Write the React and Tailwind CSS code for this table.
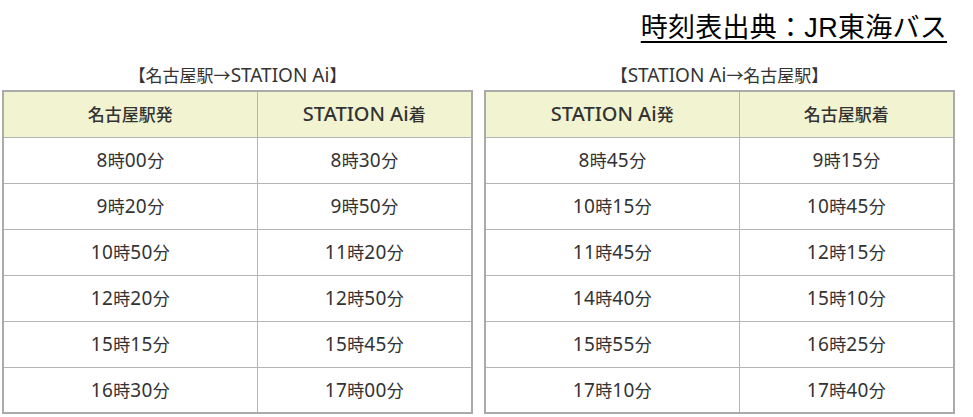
const outbound = {
  title: '【名古屋駅→STATION Ai】',
  head: ['名古屋駅発', 'STATION Ai着'],
  rows: [
    ['8時00分', '8時30分'],
    ['9時20分', '9時50分'],
    ['10時50分', '11時20分'],
    ['12時20分', '12時50分'],
    ['15時15分', '15時45分'],
    ['16時30分', '17時00分'],
  ],
};

const inbound = {
  title: '【STATION Ai→名古屋駅】',
  head: ['STATION Ai発', '名古屋駅着'],
  rows: [
    ['8時45分', '9時15分'],
    ['10時15分', '10時45分'],
    ['11時45分', '12時15分'],
    ['14時40分', '15時10分'],
    ['15時55分', '16時25分'],
    ['17時10分', '17時40分'],
  ],
};

// latin runs are set a bit larger than the kana/kanji, like the source font does
const Mixed = ({ text, latin }) =>
  text.split(/([A-Za-z0-9 ]+)/).map((part, i) =>
    /^[A-Za-z0-9 ]+$/.test(part) ? (
      <span key={i} className={latin}>{part}</span>
    ) : (
      <span key={i}>{part}</span>
    )
  );

const Timetable = ({ data }) => (
  <div className="w-[471px] flex flex-col">
    <div className="h-[30px] flex items-start justify-center pt-[4px] text-[17px] leading-[22px] text-[#333]">
      <span><Mixed text={data.title} latin="text-[19px]" /></span>
    </div>
    <table className="w-full border-collapse border-2 border-[#aaa] text-[#333]">
      <thead>
        <tr className="bg-[#f2f3d0] h-[46px]">
          <th className="w-[254px] border border-[#b5b5b5] text-[17px] font-medium">
            <Mixed text={data.head[0]} latin="text-[20px]" />
          </th>
          <th className="border border-[#b5b5b5] text-[17px] font-medium">
            <Mixed text={data.head[1]} latin="text-[20px]" />
          </th>
        </tr>
      </thead>
      <tbody>
        {data.rows.map((r, i) => (
          <tr key={i} className="h-[46px]">
            {r.map((c, j) => (
              <td key={j} className="border border-[#b5b5b5] text-center text-[17px]">
                <Mixed text={c} latin="text-[19px] tracking-[0.02em]" />
              </td>
            ))}
          </tr>
        ))}
      </tbody>
    </table>
  </div>
);

export default function App() {
  return (
    <div className="w-[973px] h-[417px] bg-white overflow-hidden" style={{ fontFamily: '"Noto Sans", "Noto Sans CJK JP", sans-serif' }}>
      <div className="flex justify-end pr-[26px] pt-[10px] h-[60px]">
        <span className="text-[27px] leading-[36px] text-black underline underline-offset-[4px] decoration-[2px] tracking-[0.01em]" style={{ fontFamily: '"Liberation Sans", "Noto Sans CJK JP", sans-serif' }}>
          時刻表出典：JR東海バス
        </span>
      </div>
      <div className="flex gap-[11px] pl-[2px]">
        <Timetable data={outbound} />
        <Timetable data={inbound} />
      </div>
    </div>
  );
}
